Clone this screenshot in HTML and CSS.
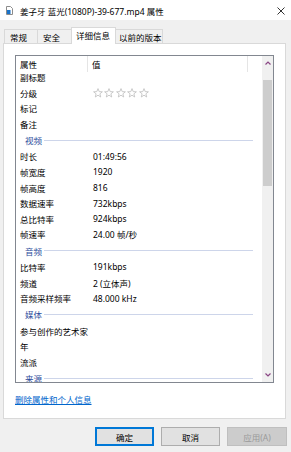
FILE: index.html
```html
<!DOCTYPE html>
<html lang="zh-CN">
<head>
    <meta charset="UTF-8">
    <title>姜子牙 蓝光(1080P)-39-677.mp4 属性</title>
    <link rel="stylesheet" href="styles.css">
</head>
<body>
    <div class="titlebar">
        <svg class="title-icon" width="7" height="9" viewBox="0 0 7 9">
            <path d="M0.5 0.5 H4.5 L6.5 2.5 V8.5 H0.5 Z" fill="#fff" stroke="#8c8c8c"/>
            <rect x="1" y="4" width="3.5" height="4" fill="#1a73c9"/>
        </svg>
        <div class="title">姜子牙 蓝光(1080P)-39-677.mp4 属性</div>
        <svg class="close" width="8" height="8" viewBox="0 0 8 8">
            <path d="M0.5 0.5 L7.5 7.5 M7.5 0.5 L0.5 7.5" stroke="#333" stroke-width="1"/>
        </svg>
    </div>

    <div class="tabs">
        <div class="tab tab-general">常规</div>
        <div class="tab tab-security">安全</div>
        <div class="tab tab-details active">详细信息</div>
        <div class="tab tab-previous">以前的版本</div>
    </div>

    <div class="panel">
        <div class="list">
            <div class="list-main">
                <div class="list-head">
                    <div class="col-name">属性</div>
                    <div class="col-value">值</div>
                    <div class="col-rest"></div>
                </div>
                <div class="list-body">
                    <div class="rows">
                        <div class="row"><span class="name">副标题</span></div>
                        <div class="row">
                            <span class="name">分级</span>
                            <span class="stars">
                                <svg width="10" height="10" viewBox="0 0 10 10"><polygon points="5,0.6 6.2,3.6 9.4,3.8 6.9,5.8 7.7,9 5,7.2 2.3,9 3.1,5.8 0.6,3.8 3.8,3.6" fill="#fff" stroke="#c4c4c4" stroke-width="0.9"/></svg>
                                <svg width="10" height="10" viewBox="0 0 10 10"><polygon points="5,0.6 6.2,3.6 9.4,3.8 6.9,5.8 7.7,9 5,7.2 2.3,9 3.1,5.8 0.6,3.8 3.8,3.6" fill="#fff" stroke="#c4c4c4" stroke-width="0.9"/></svg>
                                <svg width="10" height="10" viewBox="0 0 10 10"><polygon points="5,0.6 6.2,3.6 9.4,3.8 6.9,5.8 7.7,9 5,7.2 2.3,9 3.1,5.8 0.6,3.8 3.8,3.6" fill="#fff" stroke="#c4c4c4" stroke-width="0.9"/></svg>
                                <svg width="10" height="10" viewBox="0 0 10 10"><polygon points="5,0.6 6.2,3.6 9.4,3.8 6.9,5.8 7.7,9 5,7.2 2.3,9 3.1,5.8 0.6,3.8 3.8,3.6" fill="#fff" stroke="#c4c4c4" stroke-width="0.9"/></svg>
                                <svg width="10" height="10" viewBox="0 0 10 10"><polygon points="5,0.6 6.2,3.6 9.4,3.8 6.9,5.8 7.7,9 5,7.2 2.3,9 3.1,5.8 0.6,3.8 3.8,3.6" fill="#fff" stroke="#c4c4c4" stroke-width="0.9"/></svg>
                            </span>
                        </div>
                        <div class="row"><span class="name">标记</span></div>
                        <div class="row"><span class="name">备注</span></div>

                        <div class="group">视频</div>
                        <div class="row"><span class="name">时长</span><span>01:49:56</span></div>
                        <div class="row"><span class="name">帧宽度</span><span>1920</span></div>
                        <div class="row"><span class="name">帧高度</span><span>816</span></div>
                        <div class="row"><span class="name">数据速率</span><span>732kbps</span></div>
                        <div class="row"><span class="name">总比特率</span><span>924kbps</span></div>
                        <div class="row"><span class="name">帧速率</span><span>24.00 帧/秒</span></div>

                        <div class="group">音频</div>
                        <div class="row"><span class="name">比特率</span><span>191kbps</span></div>
                        <div class="row"><span class="name">频道</span><span>2 (立体声)</span></div>
                        <div class="row"><span class="name">音频采样频率</span><span>48.000 kHz</span></div>

                        <div class="group">媒体</div>
                        <div class="row"><span class="name">参与创作的艺术家</span></div>
                        <div class="row"><span class="name">年</span></div>
                        <div class="row"><span class="name">流派</span></div>

                        <div class="group">来源</div>
                    </div>
                </div>
            </div>
            <div class="scrollbar">
                <div class="arrow">
                    <svg width="6" height="4" viewBox="0 0 6 4"><path d="M0.5 3.5 L3 1 L5.5 3.5" fill="none" stroke="#8a4684" stroke-width="1.2"/></svg>
                </div>
                <div class="thumb"></div>
                <div class="track"></div>
                <div class="arrow">
                    <svg width="6" height="4" viewBox="0 0 6 4"><path d="M0.5 0.5 L3 3 L5.5 0.5" fill="none" stroke="#8a4684" stroke-width="1.2"/></svg>
                </div>
            </div>
        </div>
        <a class="link" href="#">删除属性和个人信息</a>
    </div>

    <div class="buttons">
        <button class="btn default">确定</button>
        <button class="btn">取消</button>
        <button class="btn disabled">应用(A)</button>
    </div>
</body>
</html>
```

FILE: styles.css
```css
* {
    margin: 0;
    padding: 0;
    box-sizing: border-box;
    font-family: "Noto Sans", "Noto Sans CJK SC", sans-serif;
}

body {
    width: 291px;
    height: 452px;
    background: #f0f0f0;
    font-size: 8.5px;
    color: #111;
    overflow: hidden;
}

.titlebar {
    height: 20px;
    background: #fff;
    display: flex;
    align-items: center;
    padding: 1px 0 0 6px;
}

.title-icon {
    margin-right: 7px;
}

.title {
    flex: 1;
    color: #000;
    white-space: nowrap;
}

.close {
    margin-right: 6px;
}

.tabs {
    display: flex;
    align-items: flex-end;
    height: 23px;
    padding-left: 4px;
}

.tab {
    height: 14px;
    display: flex;
    align-items: center;
    padding-left: 5px;
    background: #f0f0f0;
    border: 1px solid #d9d9d9;
    border-bottom: none;
    margin-right: -1px;
    color: #000;
    white-space: nowrap;
    flex-shrink: 0;
}

.tab-general { width: 34px; }
.tab-security { width: 35px; }
.tab-details { width: 45px; padding-left: 4px; }
.tab-previous { width: 48px; padding-left: 3px; }

.tab.active {
    height: 17px;
    background: #fff;
    margin-bottom: -1px;
    position: relative;
    z-index: 1;
    padding-bottom: 2px;
}

.panel {
    margin: 0 5px 0 3px;
    height: 376px;
    background: #fff;
    border: 1px solid #d9d9d9;
    padding: 11px 11px 0 11px;
}

.list {
    height: 328px;
    border: 1px solid #828790;
    display: flex;
}

.list-main {
    flex: 1;
    display: flex;
    flex-direction: column;
    min-width: 0;
}

.list-head {
    height: 18px;
    display: flex;
    color: #000;
}

.list-head > div {
    border-right: 1px solid #e5e5e5;
    height: 16px;
    padding-top: 2px;
}

.col-name {
    width: 72px;
    padding-left: 4px;
}

.col-value {
    width: 160px;
    padding-left: 4px;
}

.list-head > .col-rest {
    width: 14px;
    border-right: none;
}

.list-body {
    flex: 1;
    overflow: hidden;
}

.rows {
    margin-top: -5.4px;
}

.row {
    height: 15.6px;
    display: flex;
    align-items: center;
    color: #000;
    white-space: nowrap;
}

.row:first-child {
    height: 16.2px;
}

.row .name {
    width: 77px;
    padding-left: 4px;
}

.stars {
    display: flex;
    gap: 1.4px;
    margin-top: 1px;
}

.group {
    height: 17px;
    display: flex;
    align-items: center;
    gap: 2px;
    padding-left: 9px;
    color: #2c4c9c;
}

.group::after {
    content: '';
    flex: 1;
    height: 1px;
    background: #cdd5ea;
    margin-right: 9px;
}

.scrollbar {
    width: 11px;
    background: #f0f0f0;
    display: flex;
    flex-direction: column;
    align-items: center;
}

.arrow {
    height: 14px;
    display: flex;
    align-items: center;
    justify-content: center;
}

.thumb {
    width: 9px;
    height: 106px;
    margin-top: 10px;
    background: #cdcdcd;
}

.track {
    flex: 1;
}

.link {
    display: inline-block;
    margin-top: 10px;
    color: #0066cc;
    text-decoration: underline;
}

.buttons {
    display: flex;
    justify-content: flex-end;
    gap: 7px;
    padding: 8px 4px 0 0;
}

.btn {
    width: 59px;
    height: 19px;
    background: #e1e1e1;
    border: 1px solid #adadad;
    font-size: 8.5px;
    color: #000;
}

.btn.default {
    border: 1px solid #0078d7;
    box-shadow: inset 0 0 0 1px #0078d7;
}

.btn.disabled {
    width: 60px;
    background: #cccccc;
    border-color: #bfbfbf;
    color: #9a9a9a;
}
```
